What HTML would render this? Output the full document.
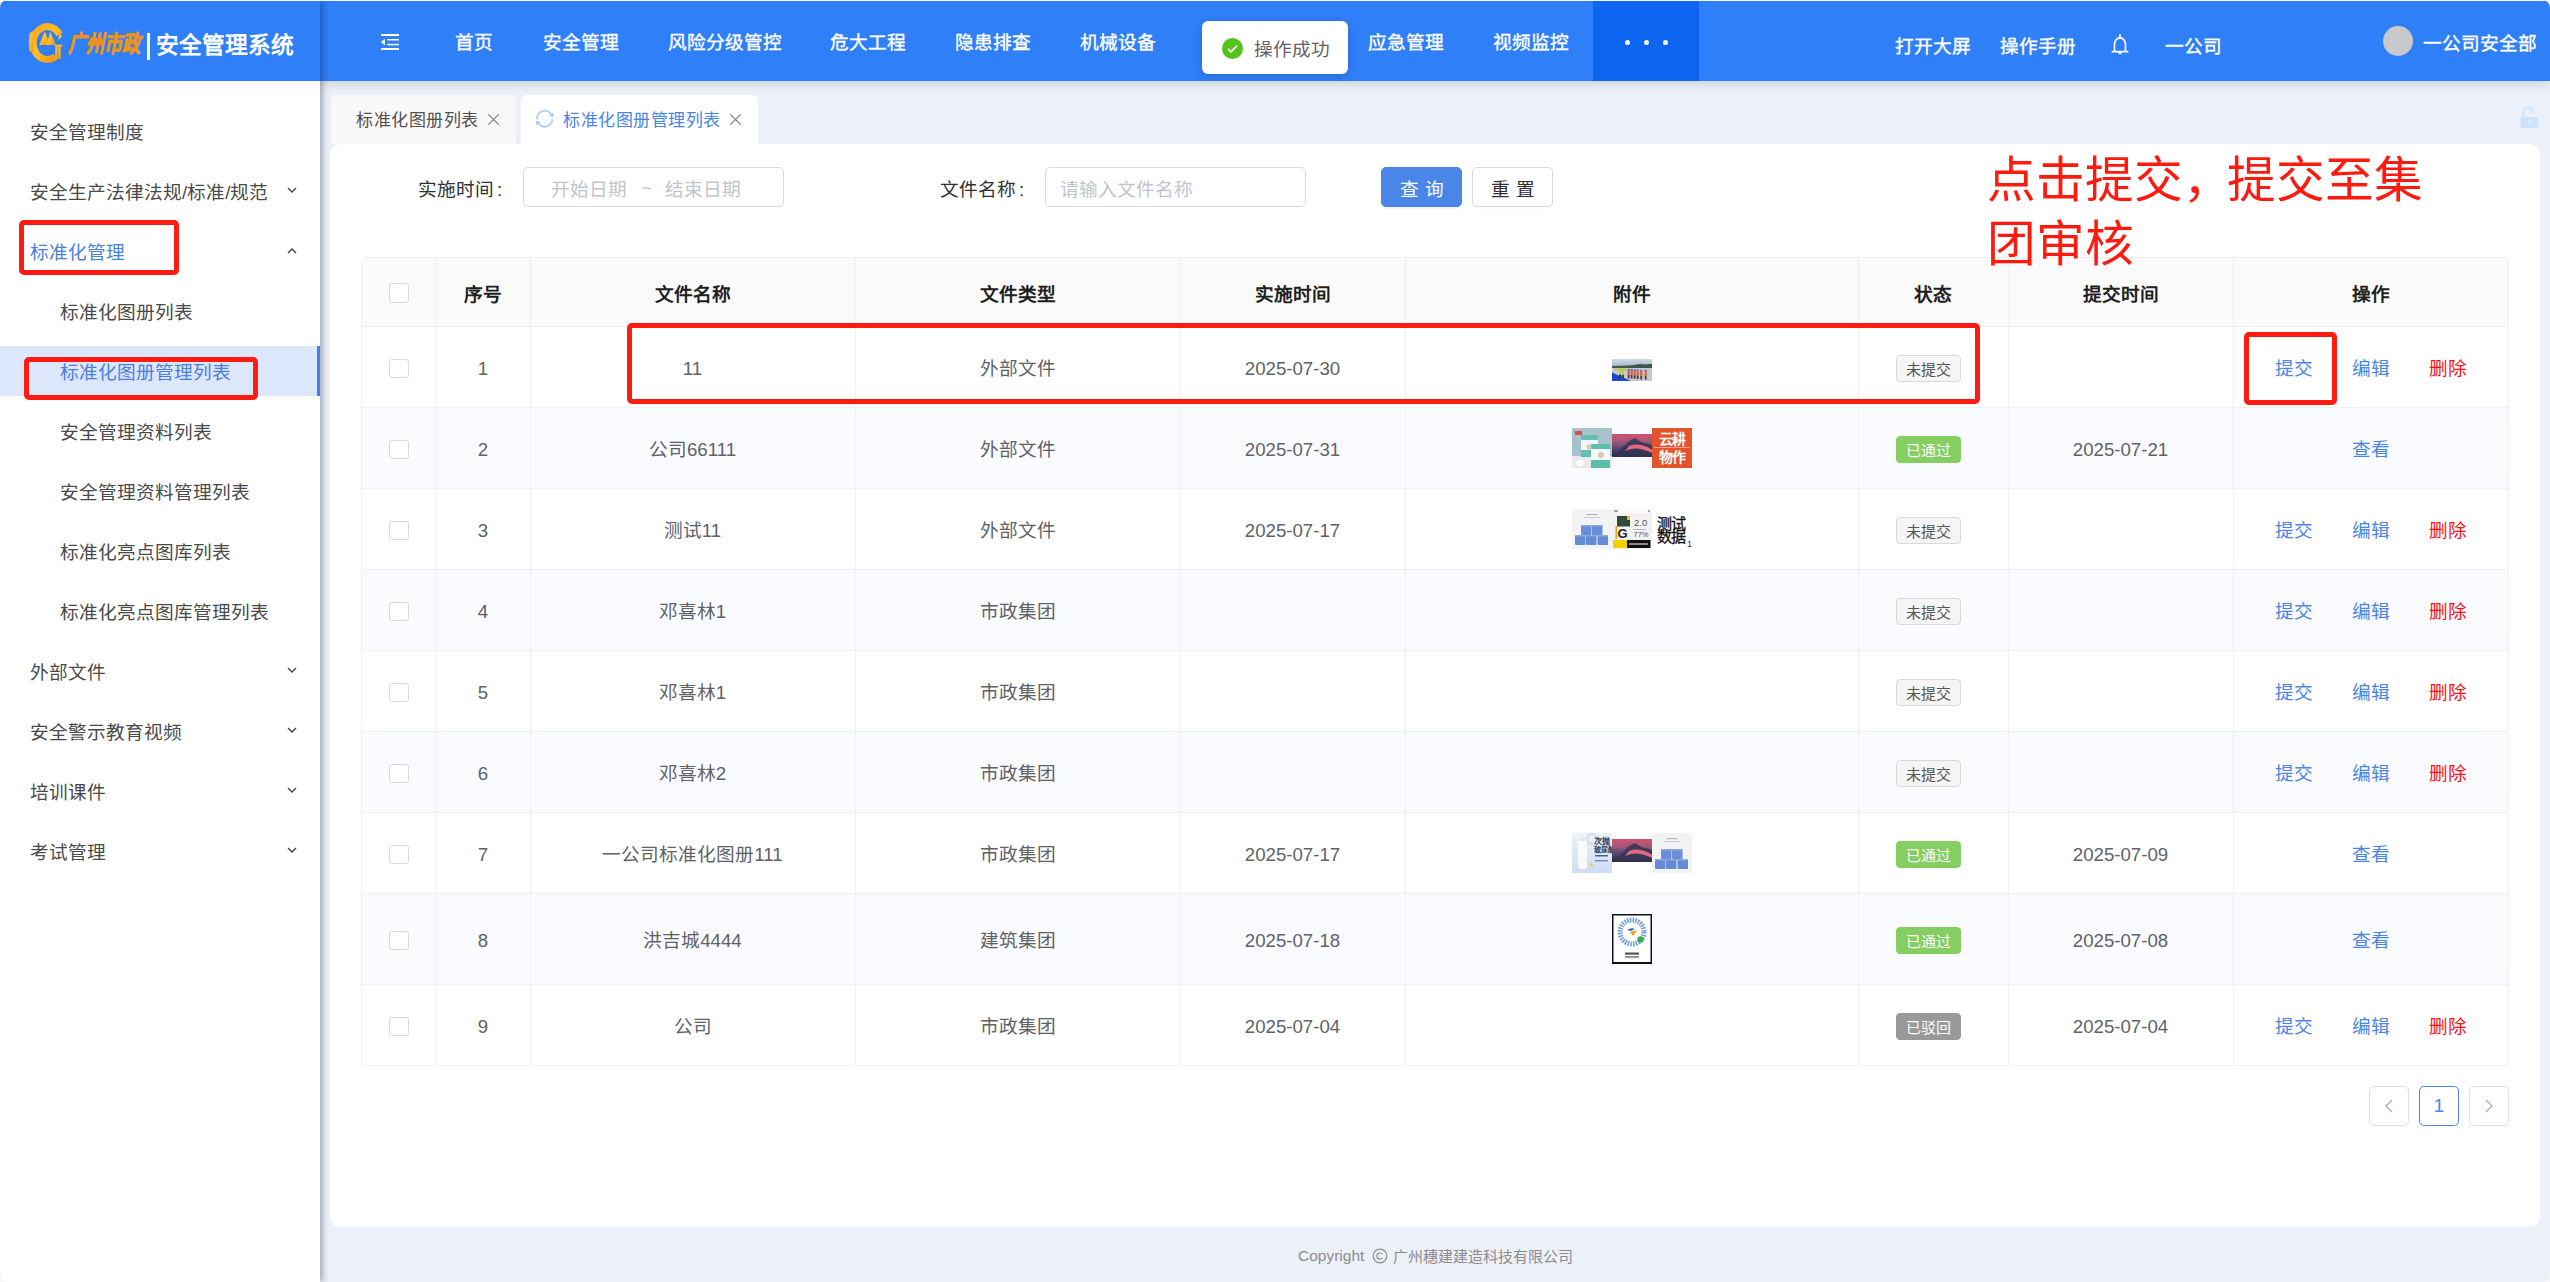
<!DOCTYPE html><html lang="zh-CN"><head><meta charset="utf-8"><style>
*{box-sizing:border-box;margin:0;padding:0}
html,body{width:2550px;height:1282px;overflow:hidden;background:#f7f7f7;font-family:"Liberation Sans",sans-serif}
.win{position:absolute;left:0;top:0;width:2550px;height:1282px;border-radius:8px;overflow:hidden;background:#ecf0f9}
.abs{position:absolute;white-space:nowrap}
.hdr{position:absolute;left:0;top:1px;width:2550px;height:80px;background:#2f7ff9;box-shadow:0 2px 10px rgba(0,21,41,.16);z-index:5}
.nav{position:absolute;top:0;height:80px;line-height:80px;color:#fff;font-size:18.67px;font-weight:500;white-space:nowrap;-webkit-text-stroke:0.35px #fff}
.side{position:absolute;left:0;top:1px;width:320px;height:1281px;background:#fff;box-shadow:2px 0 7px rgba(0,21,41,.38);z-index:6}
.mi{position:absolute;left:30px;width:290px;height:60px;line-height:60px;font-size:18.67px;color:#303133;white-space:nowrap}
.mi.sub{padding-left:30px}
.chev{position:absolute;left:287px;top:26px;width:10px;height:7px}
.card{position:absolute;left:330px;top:144px;width:2210px;height:1083px;background:#fff;border-radius:10px}
.tab{position:absolute;top:95px;height:49px;border-radius:6px 6px 0 0;font-size:17px;letter-spacing:0.5px;line-height:52px;white-space:nowrap}
.lbl{position:absolute;font-size:18.67px;color:#303133;line-height:24px;white-space:nowrap}
.inp{position:absolute;top:167px;height:40px;border:1px solid #d9d9d9;border-radius:5px;background:#fff}
.ph{position:absolute;font-size:18.67px;color:#c0c4cc;line-height:24px;white-space:nowrap}
.btn{position:absolute;top:167px;height:40px;border-radius:5px;font-size:18.67px;line-height:43px;text-align:center;letter-spacing:6px;white-space:nowrap}
.tbl{position:absolute;left:361px;top:257px;width:2148px;height:809px;border:1px solid #efefef;border-radius:5px 5px 0 0;overflow:hidden}
.row{position:absolute;left:0;width:2146px;border-bottom:1px solid #efefef}
.vl{position:absolute;top:0;width:1px;height:808px;background:#efefef}
.cell{position:absolute;text-align:center;font-size:18.67px;color:#606266;white-space:nowrap}
.th{font-weight:bold;color:#1f1f1f}
.cb{position:absolute;left:389.3px;width:19.5px;height:19.5px;border:1px solid #d9d9d9;border-radius:3px;background:#fff}
.tag{position:absolute;left:1896px;width:65px;height:27px;border-radius:4px;font-size:15px;line-height:28px;text-align:center;white-space:nowrap}
.t0{background:#f5f5f5;border:1px solid #d9d9d9;color:#555}
.t1{background:#85ce61;border:1px solid #85ce61;color:#fff}
.t2{background:#999;border:1px solid #999;color:#fff}
.lk{position:absolute;font-size:18.67px;line-height:24px;white-space:nowrap}
.blue{color:#4a84e6}
.red{color:#f81414}
.rb{position:absolute;border:5px solid #ff1a12;border-radius:5px;z-index:20}
.pg{position:absolute;top:1086px;width:40px;height:40px;border:1px solid #dcdfe6;border-radius:5px;background:#fff;text-align:center;line-height:38px;font-size:18.67px;color:#c0c4cc}
</style></head><body><div class="win">
<div class="hdr">
<svg class="abs" style="left:370px;top:-1px" width="40" height="60" viewBox="370 0 40 60">
<rect x="381" y="34" width="18" height="2" fill="#fff"/><rect x="387.3" y="39" width="11.7" height="1.5" fill="#fff"/>
<rect x="387.3" y="43.8" width="11.7" height="1.5" fill="#fff"/><rect x="381" y="48" width="18" height="2" fill="#fff"/>
<path d="M380.8 42.1 L385 38.8 L385 45.4 Z" fill="#fff"/></svg>
<div class="nav" style="left:455px;top:2px">首页</div>
<div class="nav" style="left:543px;top:2px">安全管理</div>
<div class="nav" style="left:668px;top:2px">风险分级管控</div>
<div class="nav" style="left:830px;top:2px">危大工程</div>
<div class="nav" style="left:955px;top:2px">隐患排查</div>
<div class="nav" style="left:1080px;top:2px">机械设备</div>
<div class="nav" style="left:1368px;top:2px">应急管理</div>
<div class="nav" style="left:1493px;top:2px">视频监控</div>
<div class="abs" style="left:1593px;top:0;width:106px;height:80px;background:#0c66f1"></div>
<div class="abs" style="left:1624.5px;top:39px;width:5px;height:5px;border-radius:50%;background:#fff"></div>
<div class="abs" style="left:1643.5px;top:39px;width:5px;height:5px;border-radius:50%;background:#fff"></div>
<div class="abs" style="left:1662.5px;top:39px;width:5px;height:5px;border-radius:50%;background:#fff"></div>
<div class="nav" style="left:1895px;top:6px">打开大屏</div>
<div class="nav" style="left:2000px;top:6px">操作手册</div>
<div class="nav" style="left:2165px;top:6px">一公司</div>
<svg class="abs" style="left:2100px;top:-1px" width="40" height="60" viewBox="2100 0 40 60">
<path d="M2120 35 V38" stroke="#fff" stroke-width="1.8" stroke-linecap="round"/>
<path d="M2114.5 51 V44.5 A5.5 6.6 0 0 1 2125.5 44.5 V51" fill="none" stroke="#fff" stroke-width="1.6"/>
<path d="M2112.3 51.6 H2127.7" stroke="#fff" stroke-width="1.6" stroke-linecap="round"/>
<path d="M2118 52 A2 2.2 0 0 0 2122 52 Z" fill="#fff"/></svg>
<div class="abs" style="left:2383px;top:25px;width:30px;height:30px;border-radius:50%;background:#c9c9cb"></div>
<div class="nav" style="left:2423px;top:2.5px">一公司安全部</div>
<div class="abs" style="left:1202px;top:20px;width:146px;height:53px;background:#fff;border-radius:6px;box-shadow:0 2px 10px rgba(0,0,0,.18);z-index:9"></div>
<svg class="abs" style="left:1222px;top:37px;z-index:10" width="21" height="21" viewBox="0 0 21 21"><circle cx="10.5" cy="10.5" r="10.5" fill="#52c41a"/>
<path d="M6 10.8 L9.2 13.8 L15 7.5" fill="none" stroke="#fff" stroke-width="1.8"/></svg>
<div class="abs" style="left:1254px;top:37px;line-height:24px;font-size:18.67px;color:#606266;z-index:10">操作成功</div>
</div>
<div class="side">
<div class="abs" style="left:0;top:0;width:320px;height:80px;background:#2f7ff9"></div>
<svg class="abs" style="left:0;top:-1px" width="160" height="80" viewBox="0 0 160 80">
<defs><linearGradient id="gl" x1="0" y1="0" x2="1" y2="1"><stop offset="0" stop-color="#f5a623"/><stop offset="0.45" stop-color="#fbbf2a"/><stop offset="1" stop-color="#ec8f14"/></linearGradient></defs>
<path d="M59.5 34.5 A14.2 16.4 0 1 0 55.5 56.5" fill="none" stroke="url(#gl)" stroke-width="7"/>
<path d="M29.5 33 Q28 42 29.5 51 L33 53 L33 31 Z" fill="url(#gl)"/>
<path d="M59 32 L62.2 36.8 L58.5 40 Z" fill="url(#gl)"/>
<path d="M39.2 45 L44.7 31.2 L50.5 45 Z" fill="url(#gl)"/>
<path d="M46.5 45 L50.2 31.5 L55.8 45 Z" fill="url(#gl)"/>
<rect x="55.2" y="44.7" width="2.5" height="14.2" fill="url(#gl)"/><rect x="58.3" y="44.7" width="2.4" height="14.2" fill="url(#gl)"/>
<rect x="55" y="44.7" width="7.3" height="2" fill="url(#gl)"/>
</svg>
<div class="abs" style="left:68px;top:23px;height:40px;line-height:40px;font-family:Liberation Serif,serif;font-style:italic;font-size:18px;color:#f2a01e;font-weight:bold;letter-spacing:0px;transform:scaleY(1.3);transform-origin:0 50%;-webkit-text-stroke:0.6px #ec9418">广州市政</div>
<div class="abs" style="left:147px;top:32px;width:3px;height:27px;background:#fff"></div>
<div class="abs" style="left:156px;top:24px;height:40px;line-height:40px;font-size:22.67px;color:#fff;font-weight:bold">安全管理系统</div>
<div class="abs" style="left:0;top:345px;width:320px;height:50px;background:#dde7fb"></div>
<div class="abs" style="left:317px;top:345px;width:3px;height:50px;background:#3f7ff0"></div>
<div class="mi" style="top:102px;color:#4a4a4a">安全管理制度</div>
<div class="mi" style="top:162px;color:#4a4a4a">安全生产法律法规/标准/规范</div>
<svg class="abs" style="left:287px;top:186px" width="10" height="7" viewBox="0 0 10 7"><path d="M1 1 L5 5 L9 1" fill="none" stroke="#474747" stroke-width="1.5"/></svg>
<div class="mi" style="top:222px;color:#4a7fe0">标准化管理</div>
<svg class="abs" style="left:287px;top:246px" width="10" height="7" viewBox="0 0 10 7"><path d="M1 6 L5 2 L9 6" fill="none" stroke="#474747" stroke-width="1.5"/></svg>
<div class="mi sub" style="top:282px;color:#4a4a4a">标准化图册列表</div>
<div class="mi sub" style="top:342px;color:#4a7fe0">标准化图册管理列表</div>
<div class="mi sub" style="top:402px;color:#4a4a4a">安全管理资料列表</div>
<div class="mi sub" style="top:462px;color:#4a4a4a">安全管理资料管理列表</div>
<div class="mi sub" style="top:522px;color:#4a4a4a">标准化亮点图库列表</div>
<div class="mi sub" style="top:582px;color:#4a4a4a">标准化亮点图库管理列表</div>
<div class="mi" style="top:642px;color:#4a4a4a">外部文件</div>
<svg class="abs" style="left:287px;top:666px" width="10" height="7" viewBox="0 0 10 7"><path d="M1 1 L5 5 L9 1" fill="none" stroke="#474747" stroke-width="1.5"/></svg>
<div class="mi" style="top:702px;color:#4a4a4a">安全警示教育视频</div>
<svg class="abs" style="left:287px;top:726px" width="10" height="7" viewBox="0 0 10 7"><path d="M1 1 L5 5 L9 1" fill="none" stroke="#474747" stroke-width="1.5"/></svg>
<div class="mi" style="top:762px;color:#4a4a4a">培训课件</div>
<svg class="abs" style="left:287px;top:786px" width="10" height="7" viewBox="0 0 10 7"><path d="M1 1 L5 5 L9 1" fill="none" stroke="#474747" stroke-width="1.5"/></svg>
<div class="mi" style="top:822px;color:#4a4a4a">考试管理</div>
<svg class="abs" style="left:287px;top:846px" width="10" height="7" viewBox="0 0 10 7"><path d="M1 1 L5 5 L9 1" fill="none" stroke="#474747" stroke-width="1.5"/></svg>
</div>
<div class="abs" style="left:330px;top:142px;width:2210px;height:1px;background:#ededed"></div>
<div class="tab" style="left:331px;width:185px;background:#f9f9fa;color:#505050"><span class="abs" style="left:25px">标准化图册列表</span></div>
<svg class="abs" style="left:487px;top:113px" width="13" height="13" viewBox="0 0 13 13"><path d="M1.3 1.3 L11.7 11.7 M11.7 1.3 L1.3 11.7" stroke="#7a7a7a" stroke-width="1.2"/></svg>
<div class="tab" style="left:521px;width:237px;height:50px;background:#fff;color:#4a84e6"><span class="abs" style="left:42px">标准化图册管理列表</span></div>
<svg class="abs" style="left:530px;top:100px" width="30" height="40" viewBox="530 100 30 40">
<path d="M537.1 119.3 A7.6 7.6 0 0 1 551.2 114.6" fill="none" stroke="#9ecafb" stroke-width="1.6"/>
<path d="M549 116.3 L553.3 112.6 L553.4 117 Z" fill="#9ecafb"/>
<path d="M552.3 119.3 A7.6 7.6 0 0 1 538.2 123" fill="none" stroke="#9ecafb" stroke-width="1.6"/>
<path d="M535.9 121 L540.3 121.3 L536.1 125.2 Z" fill="#9ecafb"/></svg>
<svg class="abs" style="left:729px;top:113px" width="13" height="13" viewBox="0 0 13 13"><path d="M1.3 1.3 L11.7 11.7 M11.7 1.3 L1.3 11.7" stroke="#7a7a7a" stroke-width="1.2"/></svg>
<svg class="abs" style="left:2520px;top:107px" width="19" height="22" viewBox="0 0 19 22">
<path d="M3.5 10 V6 A5 5 0 0 1 13.5 5.5 V6.5" fill="none" stroke="#cce4fb" stroke-width="2"/>
<rect x="0.5" y="10" width="18" height="11" fill="#cce4fb"/><rect x="8.5" y="13" width="2" height="4" fill="#ecf0f9"/></svg>
<div class="card"></div>
<div class="lbl" style="left:418px;top:177.5px">实施时间<span style="margin-left:3px">:</span></div>
<div class="inp" style="left:523px;width:261px"></div>
<div class="ph" style="left:551px;top:178px">开始日期</div>
<div class="ph" style="left:641px;top:176px">~</div>
<div class="ph" style="left:665px;top:178px">结束日期</div>
<div class="lbl" style="left:940px;top:177.5px">文件名称<span style="margin-left:3px">:</span></div>
<div class="inp" style="left:1045px;width:261px"></div>
<div class="ph" style="left:1060px;top:178px">请输入文件名称</div>
<div class="btn" style="left:1381px;width:81px;background:#4a86e8;color:#fff;border:1px solid #4a86e8;padding-left:6px;box-shadow:0 2px 0 rgba(0,0,0,.045)">查询</div>
<div class="btn" style="left:1472px;width:81px;background:#fff;color:#303133;border:1px solid #d9d9d9;padding-left:6px;box-shadow:0 2px 0 rgba(0,0,0,.016)">重置</div>
<div class="abs" style="left:1987px;top:148px;font-size:48.67px;line-height:64.3px;color:#ff1a10;white-space:normal;width:470px;z-index:21">点击提交<span style="letter-spacing:-5px">，</span>提交至集团审核</div>
<div class="tbl">
<div class="row" style="top:0;height:69px;background:#fafafa"></div>
<div class="row" style="top:69px;height:81px;background:#fff"></div>
<div class="row" style="top:150px;height:81px;background:#fafbfe"></div>
<div class="row" style="top:231px;height:81px;background:#fff"></div>
<div class="row" style="top:312px;height:81px;background:#fafbfe"></div>
<div class="row" style="top:393px;height:81px;background:#fff"></div>
<div class="row" style="top:474px;height:81px;background:#fafbfe"></div>
<div class="row" style="top:555px;height:81px;background:#fff"></div>
<div class="row" style="top:636px;height:91px;background:#fafbfe"></div>
<div class="row" style="top:727px;height:80px;background:#fff;border-bottom:none"></div>
<div class="vl" style="left:74px"></div>
<div class="vl" style="left:168px"></div>
<div class="vl" style="left:493px"></div>
<div class="vl" style="left:818px"></div>
<div class="vl" style="left:1043px"></div>
<div class="vl" style="left:1496px"></div>
<div class="vl" style="left:1646px"></div>
<div class="vl" style="left:1871px"></div>
</div>
<div class="cell th" style="left:436px;width:94px;top:283.0px;line-height:24px;">序号</div>
<div class="cell th" style="left:530px;width:325px;top:283.0px;line-height:24px;">文件名称</div>
<div class="cell th" style="left:855px;width:325px;top:283.0px;line-height:24px;">文件类型</div>
<div class="cell th" style="left:1180px;width:225px;top:283.0px;line-height:24px;">实施时间</div>
<div class="cell th" style="left:1405px;width:453px;top:283.0px;line-height:24px;">附件</div>
<div class="cell th" style="left:1858px;width:150px;top:283.0px;line-height:24px;">状态</div>
<div class="cell th" style="left:2008px;width:225px;top:283.0px;line-height:24px;">提交时间</div>
<div class="cell th" style="left:2233px;width:275px;top:283.0px;line-height:24px;">操作</div>
<div class="cb" style="top:283px"></div>
<div class="cb" style="top:358.8px"></div>
<div class="cell" style="left:436px;width:94px;top:357.0px;line-height:24px;">1</div>
<div class="cell" style="left:530px;width:325px;top:357.0px;line-height:24px;">11</div>
<div class="cell" style="left:855px;width:325px;top:357.0px;line-height:24px;">外部文件</div>
<div class="cell" style="left:1180px;width:225px;top:357.0px;line-height:24px;">2025-07-30</div>
<div class="tag t0" style="top:355.0px">未提交</div>
<div class="lk blue" style="left:2275px;top:357.0px">提交</div>
<div class="lk blue" style="left:2352px;top:357.0px">编辑</div>
<div class="lk red" style="left:2429px;top:357.0px">删除</div>
<div class="cb" style="top:439.8px"></div>
<div class="cell" style="left:436px;width:94px;top:438.0px;line-height:24px;">2</div>
<div class="cell" style="left:530px;width:325px;top:438.0px;line-height:24px;">公司66111</div>
<div class="cell" style="left:855px;width:325px;top:438.0px;line-height:24px;">外部文件</div>
<div class="cell" style="left:1180px;width:225px;top:438.0px;line-height:24px;">2025-07-31</div>
<div class="cell" style="left:2008px;width:225px;top:438.0px;line-height:24px;">2025-07-21</div>
<div class="tag t1" style="top:436.0px">已通过</div>
<div class="lk blue" style="left:2352px;top:438.0px">查看</div>
<div class="cb" style="top:520.8px"></div>
<div class="cell" style="left:436px;width:94px;top:519.0px;line-height:24px;">3</div>
<div class="cell" style="left:530px;width:325px;top:519.0px;line-height:24px;">测试11</div>
<div class="cell" style="left:855px;width:325px;top:519.0px;line-height:24px;">外部文件</div>
<div class="cell" style="left:1180px;width:225px;top:519.0px;line-height:24px;">2025-07-17</div>
<div class="tag t0" style="top:517.0px">未提交</div>
<div class="lk blue" style="left:2275px;top:519.0px">提交</div>
<div class="lk blue" style="left:2352px;top:519.0px">编辑</div>
<div class="lk red" style="left:2429px;top:519.0px">删除</div>
<div class="cb" style="top:601.8px"></div>
<div class="cell" style="left:436px;width:94px;top:600.0px;line-height:24px;">4</div>
<div class="cell" style="left:530px;width:325px;top:600.0px;line-height:24px;">邓喜林1</div>
<div class="cell" style="left:855px;width:325px;top:600.0px;line-height:24px;">市政集团</div>
<div class="tag t0" style="top:598.0px">未提交</div>
<div class="lk blue" style="left:2275px;top:600.0px">提交</div>
<div class="lk blue" style="left:2352px;top:600.0px">编辑</div>
<div class="lk red" style="left:2429px;top:600.0px">删除</div>
<div class="cb" style="top:682.8px"></div>
<div class="cell" style="left:436px;width:94px;top:681.0px;line-height:24px;">5</div>
<div class="cell" style="left:530px;width:325px;top:681.0px;line-height:24px;">邓喜林1</div>
<div class="cell" style="left:855px;width:325px;top:681.0px;line-height:24px;">市政集团</div>
<div class="tag t0" style="top:679.0px">未提交</div>
<div class="lk blue" style="left:2275px;top:681.0px">提交</div>
<div class="lk blue" style="left:2352px;top:681.0px">编辑</div>
<div class="lk red" style="left:2429px;top:681.0px">删除</div>
<div class="cb" style="top:763.8px"></div>
<div class="cell" style="left:436px;width:94px;top:762.0px;line-height:24px;">6</div>
<div class="cell" style="left:530px;width:325px;top:762.0px;line-height:24px;">邓喜林2</div>
<div class="cell" style="left:855px;width:325px;top:762.0px;line-height:24px;">市政集团</div>
<div class="tag t0" style="top:760.0px">未提交</div>
<div class="lk blue" style="left:2275px;top:762.0px">提交</div>
<div class="lk blue" style="left:2352px;top:762.0px">编辑</div>
<div class="lk red" style="left:2429px;top:762.0px">删除</div>
<div class="cb" style="top:844.8px"></div>
<div class="cell" style="left:436px;width:94px;top:843.0px;line-height:24px;">7</div>
<div class="cell" style="left:530px;width:325px;top:843.0px;line-height:24px;">一公司标准化图册111</div>
<div class="cell" style="left:855px;width:325px;top:843.0px;line-height:24px;">市政集团</div>
<div class="cell" style="left:1180px;width:225px;top:843.0px;line-height:24px;">2025-07-17</div>
<div class="cell" style="left:2008px;width:225px;top:843.0px;line-height:24px;">2025-07-09</div>
<div class="tag t1" style="top:841.0px">已通过</div>
<div class="lk blue" style="left:2352px;top:843.0px">查看</div>
<div class="cb" style="top:930.8px"></div>
<div class="cell" style="left:436px;width:94px;top:929.0px;line-height:24px;">8</div>
<div class="cell" style="left:530px;width:325px;top:929.0px;line-height:24px;">洪吉城4444</div>
<div class="cell" style="left:855px;width:325px;top:929.0px;line-height:24px;">建筑集团</div>
<div class="cell" style="left:1180px;width:225px;top:929.0px;line-height:24px;">2025-07-18</div>
<div class="cell" style="left:2008px;width:225px;top:929.0px;line-height:24px;">2025-07-08</div>
<div class="tag t1" style="top:927.0px">已通过</div>
<div class="lk blue" style="left:2352px;top:929.0px">查看</div>
<div class="cb" style="top:1016.8px"></div>
<div class="cell" style="left:436px;width:94px;top:1015.0px;line-height:24px;">9</div>
<div class="cell" style="left:530px;width:325px;top:1015.0px;line-height:24px;">公司</div>
<div class="cell" style="left:855px;width:325px;top:1015.0px;line-height:24px;">市政集团</div>
<div class="cell" style="left:1180px;width:225px;top:1015.0px;line-height:24px;">2025-07-04</div>
<div class="cell" style="left:2008px;width:225px;top:1015.0px;line-height:24px;">2025-07-04</div>
<div class="tag t2" style="top:1013.0px">已驳回</div>
<div class="lk blue" style="left:2275px;top:1015.0px">提交</div>
<div class="lk blue" style="left:2352px;top:1015.0px">编辑</div>
<div class="lk red" style="left:2429px;top:1015.0px">删除</div>
<svg class="abs" style="left:1612px;top:359px" width="40" height="22" viewBox="0 0 40 22"><defs><linearGradient id="sky" x1="0" y1="0" x2="0" y2="1"><stop offset="0" stop-color="#cfdcea"/><stop offset="1" stop-color="#a9b8c6"/></linearGradient></defs><rect width="40" height="22" fill="#c9c9c6"/><rect width="40" height="7" fill="url(#sky)"/><path d="M0 7 L10 6.8 L20 6.2 L28 5 L34 5.4 L40 4.8 V9 H0 Z" fill="#44584a"/><rect x="3" y="9.2" width="12" height="2" fill="#cdbf6a"/><path d="M0 13.5 L19 22 H0 Z" fill="#1f48c8"/><rect x="7" y="9.5" width="2.2" height="6" fill="#a8d050"/><rect x="9.8" y="9.8" width="2.2" height="6" fill="#a8d050"/><rect x="7" y="15.5" width="2" height="3.5" fill="#2a2f40"/><rect x="9.8" y="15.8" width="2" height="3.5" fill="#2a2f40"/><rect x="15.5" y="11" width="2.4" height="5" fill="#d56a4c"/><rect x="15.7" y="9.8" width="2" height="1.4" fill="#3d6fd8"/><rect x="15.8" y="16" width="1.8" height="3.5" fill="#3a3a48"/><rect x="18.5" y="11" width="2.4" height="5" fill="#d56a4c"/><rect x="18.7" y="9.8" width="2" height="1.4" fill="#3d6fd8"/><rect x="18.8" y="16" width="1.8" height="3.5" fill="#3a3a48"/><rect x="21.5" y="11.3" width="2.4" height="5" fill="#d56a4c"/><rect x="21.7" y="10.100000000000001" width="2" height="1.4" fill="#3d6fd8"/><rect x="21.8" y="16.3" width="1.8" height="3.5" fill="#3a3a48"/><rect x="24.5" y="11.5" width="2.4" height="5" fill="#d56a4c"/><rect x="24.7" y="10.3" width="2" height="1.4" fill="#3d6fd8"/><rect x="24.8" y="16.5" width="1.8" height="3.5" fill="#3a3a48"/><rect x="28" y="12" width="2.4" height="5" fill="#d56a4c"/><rect x="28.2" y="10.8" width="2" height="1.4" fill="#3d6fd8"/><rect x="28.3" y="17" width="1.8" height="3.5" fill="#3a3a48"/><rect x="32.5" y="12" width="2.4" height="5" fill="#d56a4c"/><rect x="32.7" y="10.8" width="2" height="1.4" fill="#3d6fd8"/><rect x="32.8" y="17" width="1.8" height="3.5" fill="#3a3a48"/></svg>
<svg class="abs" style="left:1572px;top:428px" width="40" height="40" viewBox="0 0 40 40"><rect width="40" height="40" fill="#a8c2cb"/><rect y="28" width="40" height="12" fill="#e9eaea"/><rect x="3" y="3" width="7" height="4" fill="#e04848"/><rect x="9" y="7" width="17" height="22" fill="#f4f7f6"/><rect x="9" y="7" width="17" height="5" fill="#62c0b0"/><rect x="9" y="22" width="17" height="7" fill="#62c0b0"/><rect x="19" y="16" width="19" height="24" fill="#f6f8f8"/><rect x="19" y="16" width="19" height="5" fill="#5ebdaa"/><rect x="19" y="32" width="19" height="8" fill="#5ebdaa"/><circle cx="29" cy="27" r="3" fill="#d8c8b8"/><circle cx="17" cy="19" r="2.5" fill="#d8c8b8"/><ellipse cx="8" cy="35" rx="4" ry="3" fill="#fff"/></svg>
<svg class="abs" style="left:1612px;top:434px" width="40" height="23" viewBox="0 0 40 23"><defs><linearGradient id="gw" x1="0" y1="0" x2="0" y2="1"><stop offset="0" stop-color="#d4506e"/><stop offset="0.3" stop-color="#a85878"/><stop offset="0.6" stop-color="#5a4a70"/><stop offset="1" stop-color="#1f2440"/></linearGradient></defs><rect width="40" height="23" fill="url(#gw)"/><path d="M0 23 L8 16 L17 7 L23 4 L29 8 L40 11 V23 Z" fill="#343556" opacity=".85"/><path d="M13 17 Q24 11 40 19 L40 15.5 Q27 8 17 12 Z" fill="#e2687e"/></svg>
<svg class="abs" style="left:1652px;top:428px" width="40" height="40" viewBox="0 0 40 40"><rect width="40" height="40" fill="#e4532b"/><rect x="2" y="19" width="36" height="1" fill="#f2a08a"/><text x="20" y="16" text-anchor="middle" font-size="14" fill="#fff" font-weight="bold" letter-spacing="-0.5">云耕</text><text x="20" y="34" text-anchor="middle" font-size="14" fill="#fff" font-weight="bold" letter-spacing="-0.5">物作</text></svg>
<svg class="abs" style="left:1572px;top:509px" width="40" height="40" viewBox="0 0 40 40"><rect width="40" height="40" fill="#f3f3f4"/><rect x="14" y="5" width="12" height="1.2" fill="#b8b8c0"/><rect x="12" y="8" width="16" height="1" fill="#c8c8d0"/><rect x="9" y="16" width="10.5" height="10" rx="1" fill="#6a8ed8"/><rect x="20" y="16" width="10.5" height="10" rx="1" fill="#6a8ed8"/><rect x="3" y="26" width="10.5" height="10" rx="1" fill="#648ad6"/><rect x="14" y="26" width="10.5" height="10" rx="1" fill="#648ad6"/><rect x="25.5" y="26" width="10.5" height="10" rx="1" fill="#648ad6"/><rect x="9" y="16" width="21.5" height="1.5" fill="#8aa8e4"/><rect x="3" y="26" width="33" height="1.5" fill="#8aa8e4"/></svg>
<svg class="abs" style="left:1612px;top:509px" width="40" height="40" viewBox="0 0 40 40"><rect width="40" height="40" fill="#f2f2f2"/><rect width="40" height="4" fill="#fafafa"/><rect x="2" y="1.5" width="4" height="1" fill="#555"/><rect x="36" y="1.5" width="2" height="1" fill="#555"/><rect x="5" y="7" width="13" height="10.5" fill="#2e4a3c"/><rect x="15" y="7" width="3" height="4" fill="#e8c020"/><rect x="3.5" y="17" width="1.6" height="13" fill="#e0a810"/><text x="5.5" y="28.5" font-size="13" font-weight="bold" fill="#222">G</text><text x="22" y="16.5" font-size="9.5" fill="#555">2.0</text><rect x="21" y="20" width="13" height="0.8" fill="#aaa"/><text x="21.5" y="28" font-size="7.5" fill="#555">77%</text><rect x="1" y="31" width="14" height="8" fill="#f5d000"/><rect x="15" y="31" width="23.5" height="8" fill="#111"/><rect x="17" y="34.3" width="19" height="1.4" fill="#bbb"/></svg>
<svg class="abs" style="left:1652px;top:509px" width="40" height="45" viewBox="0 0 40 45"><rect width="40" height="45" fill="#fff"/><text x="4.5" y="20" font-size="15" fill="#111" stroke="#111" stroke-width="0.35" letter-spacing="-0.5">测试</text><text x="4.5" y="32.5" font-size="15" fill="#111" stroke="#111" stroke-width="0.35" letter-spacing="-0.5">数据</text><text x="35" y="38" font-size="9" fill="#333">1</text></svg>
<svg class="abs" style="left:1572px;top:833px" width="40" height="40" viewBox="0 0 40 40"><defs><linearGradient id="bt" x1="0" y1="0" x2="0" y2="1"><stop offset="0" stop-color="#eef2fb"/><stop offset="1" stop-color="#cddcf2"/></linearGradient></defs><rect width="40" height="40" fill="url(#bt)"/><circle cx="20" cy="6" r="5" fill="none" stroke="#c8d6ee" stroke-width="1.5"/><rect x="6" y="5" width="9" height="31" rx="3" fill="#fafafa"/><rect x="7" y="5" width="7" height="3" fill="#e8e8e8"/><text x="22" y="11" font-size="8" font-weight="bold" fill="#23405f">次抛</text><text x="22" y="19" font-size="7" font-weight="bold" fill="#23405f">玻尿酸</text><rect x="23" y="22" width="13" height="1.5" fill="#4a6080"/><rect x="23" y="27" width="13" height="1.5" fill="#7a90a8"/><circle cx="19.5" cy="31.5" r="1.3" fill="#f0c020"/></svg>
<svg class="abs" style="left:1612px;top:839px" width="40" height="23" viewBox="0 0 40 23"><defs><linearGradient id="gw2" x1="0" y1="0" x2="0" y2="1"><stop offset="0" stop-color="#d4506e"/><stop offset="0.3" stop-color="#a85878"/><stop offset="0.6" stop-color="#5a4a70"/><stop offset="1" stop-color="#1f2440"/></linearGradient></defs><rect width="40" height="23" fill="url(#gw2)"/><path d="M0 23 L8 16 L17 7 L23 4 L29 8 L40 11 V23 Z" fill="#343556" opacity=".85"/><path d="M13 17 Q24 11 40 19 L40 15.5 Q27 8 17 12 Z" fill="#e2687e"/></svg>
<svg class="abs" style="left:1652px;top:833px" width="40" height="40" viewBox="0 0 40 40"><rect width="40" height="40" fill="#f3f3f4"/><rect x="14" y="5" width="12" height="1.2" fill="#b8b8c0"/><rect x="12" y="8" width="16" height="1" fill="#c8c8d0"/><rect x="9" y="16" width="10.5" height="10" rx="1" fill="#6a8ed8"/><rect x="20" y="16" width="10.5" height="10" rx="1" fill="#6a8ed8"/><rect x="3" y="26" width="10.5" height="10" rx="1" fill="#648ad6"/><rect x="14" y="26" width="10.5" height="10" rx="1" fill="#648ad6"/><rect x="25.5" y="26" width="10.5" height="10" rx="1" fill="#648ad6"/><rect x="9" y="16" width="21.5" height="1.5" fill="#8aa8e4"/><rect x="3" y="26" width="33" height="1.5" fill="#8aa8e4"/></svg>
<svg class="abs" style="left:1612px;top:914px" width="40" height="50" viewBox="0 0 40 50"><rect width="40" height="50" fill="#111"/><rect x="1.5" y="1.5" width="37" height="46.5" fill="#fff"/><circle cx="20" cy="18" r="12" fill="none" stroke="#5b8fcf" stroke-width="5" stroke-dasharray="1.6 1.1" opacity=".85"/><circle cx="20" cy="18" r="7.5" fill="#fff"/><path d="M15 16 Q19 13 23 15 L19 17 Z" fill="#2b6cc0"/><path d="M18 18 L25 16 L21 22 Z" fill="#f0a020"/><circle cx="28.5" cy="25.5" r="3.2" fill="#3cb050"/><rect x="13" y="38.5" width="14" height="2.2" fill="#555"/><rect x="13" y="42" width="14" height="1.8" fill="#888"/></svg>
<div class="rb" style="left:19px;top:220px;width:160px;height:55px"></div>
<div class="rb" style="left:24px;top:357px;width:234px;height:43px"></div>
<div class="rb" style="left:627px;top:323px;width:1353px;height:81px"></div>
<div class="rb" style="left:2244px;top:332px;width:93px;height:73px"></div>
<div class="pg" style="left:2369px"><svg width="12" height="14" viewBox="0 0 12 14" style="margin-top:12px"><path d="M9 1 L3 7 L9 13" fill="none" stroke="#a8abb2" stroke-width="1.3"/></svg></div>
<div class="pg" style="left:2419px;border-color:#4a86e8;color:#4a86e8">1</div>
<div class="pg" style="left:2469px"><svg width="12" height="14" viewBox="0 0 12 14" style="margin-top:12px"><path d="M3 1 L9 7 L3 13" fill="none" stroke="#a8abb2" stroke-width="1.3"/></svg></div>
<div class="abs" style="left:1298px;top:1245px;font-size:15.5px;line-height:22px;color:#8c8c8c">Copyright</div>
<svg class="abs" style="left:1372px;top:1248px" width="16" height="16" viewBox="0 0 16 16"><circle cx="8" cy="8" r="6.8" fill="none" stroke="#8c8c8c" stroke-width="1.2"/><path d="M10.3 6.2 A3 3 0 1 0 10.3 9.8" fill="none" stroke="#8c8c8c" stroke-width="1.2"/></svg>
<div class="abs" style="left:1393px;top:1246px;font-size:15px;line-height:22px;color:#8c8c8c">广州穗建建造科技有限公司</div>
<div class="abs" style="left:0;top:0;width:2550px;height:1px;background:#f8f7f4;z-index:100"></div>
</div></body></html>
